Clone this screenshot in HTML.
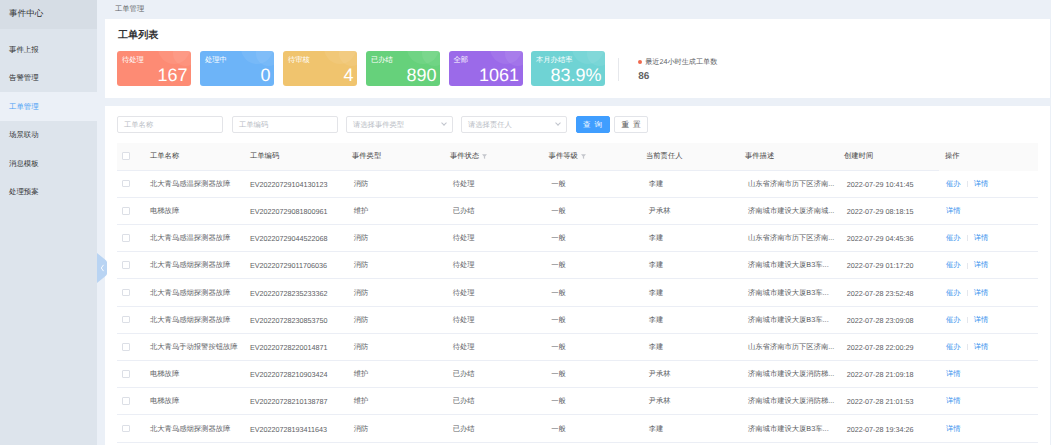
<!DOCTYPE html>
<html><head><meta charset="utf-8">
<style>
*{margin:0;padding:0;box-sizing:border-box}
html,body{width:1051px;height:445px;overflow:hidden;background:#ebf0f7;font-family:"Liberation Sans",sans-serif;color:#303133;text-rendering:geometricPrecision}
.abs{position:absolute}
#side{left:0;top:0;width:97px;height:445px;background:#dde4ec}
#side .hd{position:absolute;left:0;top:0;width:97px;height:29px;background:#d6dde5}
.mi{position:absolute;left:9px;font-size:7.4px;line-height:10px;color:#303133;white-space:nowrap}
#active{position:absolute;left:0;top:92px;width:97px;height:28.5px;background:#ebf0f7}
#handle{left:96.6px;top:253px;width:10.5px;height:30px}
.crumb{left:115px;top:4px;font-size:7.3px;line-height:10px;color:#606266}
.card{background:#fff}
#top{left:105px;top:19px;width:944.6px;height:79px}
#bot{left:105px;top:106px;width:944.6px;height:339px}
.title{left:118px;top:30px;font-size:10.1px;line-height:12px;font-weight:bold;color:#303133}
.stat{position:absolute;top:50.7px;width:74.3px;height:35.7px;border-radius:3px;overflow:hidden;color:#fff}
.stat .lb{position:absolute;left:5px;top:4.4px;font-size:7.3px;line-height:10px}
.stat .num{position:absolute;right:3.7px;top:12.9px;font-size:18px;line-height:22px}
.stat .c1{position:absolute;width:32px;height:32px;border-radius:50%;background:rgba(255,255,255,.07);left:41px;top:-18.5px}
.stat .c2{position:absolute;width:25px;height:25px;border-radius:50%;background:rgba(255,255,255,.07);left:56px;top:-9.5px}
.sep{left:618px;top:58px;width:1px;height:22.5px;background:#e6e8ec}
.dot{left:638px;top:59.5px;width:4px;height:4px;border-radius:50%;background:#f0694e}
.recent{left:645.2px;top:57.3px;font-size:7.15px;line-height:10px;color:#606266;white-space:nowrap}
.r86{left:638.2px;top:71px;font-size:10px;line-height:12px;font-weight:bold;color:#626262}
.inp{position:absolute;top:116px;height:16.5px;border:1px solid #e3e4e8;border-radius:2px;background:#fff}
.inp span{position:absolute;left:6px;top:2.5px;font-size:7.3px;line-height:10px;color:#b8bcc4;white-space:nowrap}
.inp i{position:absolute;right:6px;top:4px;width:4px;height:4px;border-right:1px solid #c0c4cc;border-bottom:1px solid #c0c4cc;transform:rotate(45deg)}
.btn{position:absolute;top:116.2px;height:16.5px;border-radius:2px;font-size:7.6px;line-height:15px;text-align:center;letter-spacing:3.8px;text-indent:3.8px}
table{position:absolute;left:117px;top:143px;width:921px;border-collapse:collapse;table-layout:fixed}
td,th{height:27.2px;padding:1.2px 0 0 6px;font-size:7.3px;text-align:left;white-space:nowrap;overflow:hidden;border-bottom:1px solid #ebeef5;color:#606266;font-weight:normal}
th{background:#fafafa;color:#444;font-weight:500;border-bottom:1px solid #ebeef5}
.cb{display:inline-block;width:7.5px;height:7.5px;border:1px solid #dcdfe6;border-radius:1px;background:#fff;vertical-align:middle;position:relative;left:-1px;top:-1.3px}
td.n{font-size:7.2px}
th:last-child{border-bottom-color:#fafafa}
td:nth-child(4){padding-left:7.8px}
td:nth-child(n+5){padding-left:8.7px}
td:nth-child(8){padding-left:9px}
td:nth-child(10){padding-left:7px}
a{color:#3d94ee;text-decoration:none}
.vl{display:inline-block;width:1px;height:6px;background:#e4e7ed;margin:0 6.1px;vertical-align:middle}
.flt{display:inline-block;margin-left:3px;width:5px;height:5px;vertical-align:middle;position:relative;top:-0.5px}
</style></head><body>
<div id="side" class="abs">
  <div class="hd"></div>
  <div class="mi" style="top:8px;font-size:8.6px">事件中心</div>
  <div id="active"></div>
  <div class="mi" style="top:44.8px">事件上报</div>
  <div class="mi" style="top:73.1px">告警管理</div>
  <div class="mi" style="top:101.8px;color:#4a9ff5">工单管理</div>
  <div class="mi" style="top:129.8px">场景联动</div>
  <div class="mi" style="top:159px">消息模板</div>
  <div class="mi" style="top:187.2px">处理预案</div>
</div>
<svg id="handle" class="abs" viewBox="0 0 10.5 30" width="10.5" height="30" style="z-index:5"><path d="M0 0 L8.3 6.8 Q10.5 8.6 10.5 11.5 L10.5 18.5 Q10.5 21.4 8.3 23.2 L0 30 Z" fill="#b9d4f3"/><path d="M6.3 12.2 L4.3 15 L6.3 17.8" stroke="#fff" stroke-width="0.9" fill="none" stroke-linecap="round"/></svg>
<div class="abs crumb">工单管理</div>
<div id="top" class="abs card"></div>
<div class="abs title">工单列表</div>
<div class="stat" style="left:117px;background:#fd8b74"><div class="c1"></div><div class="c2"></div><div class="lb">待处理</div><div class="num">167</div></div>
<div class="stat" style="left:200px;background:#6db4f8"><div class="c1"></div><div class="c2"></div><div class="lb">处理中</div><div class="num">0</div></div>
<div class="stat" style="left:283px;background:#f0c46e"><div class="c1"></div><div class="c2"></div><div class="lb">待审核</div><div class="num">4</div></div>
<div class="stat" style="left:366px;background:#66d17b"><div class="c1"></div><div class="c2"></div><div class="lb">已办结</div><div class="num">890</div></div>
<div class="stat" style="left:448.5px;background:#9b6ae9"><div class="c1"></div><div class="c2"></div><div class="lb">全部</div><div class="num">1061</div></div>
<div class="stat" style="left:531px;background:#6fd3d4"><div class="c1"></div><div class="c2"></div><div class="lb">本月办结率</div><div class="num">83.9%</div></div>
<div class="abs sep"></div>
<div class="abs dot"></div>
<div class="abs recent">最近24小时生成工单数</div>
<div class="abs r86">86</div>
<div id="bot" class="abs card"></div>
<div class="inp" style="left:117px;width:106px"><span>工单名称</span></div>
<div class="inp" style="left:232px;width:106px"><span>工单编码</span></div>
<div class="inp" style="left:346px;width:107px"><span>请选择事件类型</span><i></i></div>
<div class="inp" style="left:461px;width:106px"><span>请选择责任人</span><i></i></div>
<div class="btn" style="left:575.6px;width:34px;background:#409eff;color:#fff;border:1px solid #409eff">查询</div>
<div class="btn" style="left:614px;width:34px;background:#fff;color:#555;border:1px solid #e2e4e9">重置</div>
<table>
<colgroup><col style="width:27px"><col style="width:100px"><col style="width:102px"><col style="width:98px"><col style="width:98.6px"><col style="width:97.4px"><col style="width:99px"><col style="width:99px"><col style="width:101px"><col style="width:99px"></colgroup>
<tr><th><span class="cb"></span></th><th>工单名称</th><th>工单编码</th><th>事件类型</th><th>事件状态<svg class="flt" viewBox="0 0 5 5"><path d="M0 0.2 H5 L3.1 2.4 V4.9 L1.9 4.3 V2.4 Z" fill="#c4c6cc"/></svg></th><th>事件等级<svg class="flt" viewBox="0 0 5 5"><path d="M0 0.2 H5 L3.1 2.4 V4.9 L1.9 4.3 V2.4 Z" fill="#c4c6cc"/></svg></th><th>当前责任人</th><th>事件描述</th><th>创建时间</th><th>操作</th></tr>
<tr><td><span class="cb"></span></td><td>北大青鸟感温探测器故障</td><td class="n">EV20220729104130123</td><td>消防</td><td>待处理</td><td>一般</td><td>李建</td><td>山东省济南市历下区济南...</td><td class="n">2022-07-29 10:41:45</td><td><a>催办</a><span class="vl"></span><a>详情</a></td></tr>
<tr><td><span class="cb"></span></td><td>电梯故障</td><td class="n">EV20220729081800961</td><td>维护</td><td>已办结</td><td>一般</td><td>尹承林</td><td>济南城市建设大厦济南城...</td><td class="n">2022-07-29 08:18:15</td><td><a>详情</a></td></tr>
<tr><td><span class="cb"></span></td><td>北大青鸟感温探测器故障</td><td class="n">EV20220729044522068</td><td>消防</td><td>待处理</td><td>一般</td><td>李建</td><td>山东省济南市历下区济南...</td><td class="n">2022-07-29 04:45:36</td><td><a>催办</a><span class="vl"></span><a>详情</a></td></tr>
<tr><td><span class="cb"></span></td><td>北大青鸟感烟探测器故障</td><td class="n">EV20220729011706036</td><td>消防</td><td>待处理</td><td>一般</td><td>李建</td><td>济南城市建设大厦B3车...</td><td class="n">2022-07-29 01:17:20</td><td><a>催办</a><span class="vl"></span><a>详情</a></td></tr>
<tr><td><span class="cb"></span></td><td>北大青鸟感烟探测器故障</td><td class="n">EV20220728235233362</td><td>消防</td><td>待处理</td><td>一般</td><td>李建</td><td>济南城市建设大厦B3车...</td><td class="n">2022-07-28 23:52:48</td><td><a>催办</a><span class="vl"></span><a>详情</a></td></tr>
<tr><td><span class="cb"></span></td><td>北大青鸟感烟探测器故障</td><td class="n">EV20220728230853750</td><td>消防</td><td>待处理</td><td>一般</td><td>李建</td><td>济南城市建设大厦B3车...</td><td class="n">2022-07-28 23:09:08</td><td><a>催办</a><span class="vl"></span><a>详情</a></td></tr>
<tr><td><span class="cb"></span></td><td>北大青鸟手动报警按钮故障</td><td class="n">EV20220728220014871</td><td>消防</td><td>待处理</td><td>一般</td><td>李建</td><td>山东省济南市历下区济南...</td><td class="n">2022-07-28 22:00:29</td><td><a>催办</a><span class="vl"></span><a>详情</a></td></tr>
<tr><td><span class="cb"></span></td><td>电梯故障</td><td class="n">EV20220728210903424</td><td>维护</td><td>已办结</td><td>一般</td><td>尹承林</td><td>济南城市建设大厦消防梯...</td><td class="n">2022-07-28 21:09:18</td><td><a>详情</a></td></tr>
<tr><td><span class="cb"></span></td><td>电梯故障</td><td class="n">EV20220728210138787</td><td>维护</td><td>已办结</td><td>一般</td><td>尹承林</td><td>济南城市建设大厦消防梯...</td><td class="n">2022-07-28 21:01:53</td><td><a>详情</a></td></tr>
<tr><td><span class="cb"></span></td><td>北大青鸟感烟探测器故障</td><td class="n">EV20220728193411643</td><td>消防</td><td>已办结</td><td>一般</td><td>李建</td><td>济南城市建设大厦B3车...</td><td class="n">2022-07-28 19:34:26</td><td><a>详情</a></td></tr>
</table>
</body></html>
